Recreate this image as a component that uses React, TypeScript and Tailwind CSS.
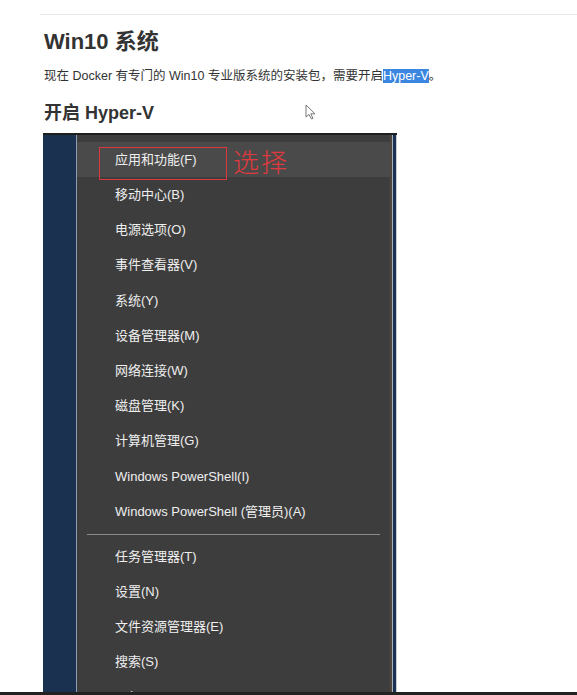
import React from "react";

const font = { fontFamily: '"Liberation Sans", "Noto Sans CJK SC", sans-serif' };

const groupA = [
  "应用和功能(F)",
  "移动中心(B)",
  "电源选项(O)",
  "事件查看器(V)",
  "系统(Y)",
  "设备管理器(M)",
  "网络连接(W)",
  "磁盘管理(K)",
  "计算机管理(G)",
  "Windows PowerShell(I)",
  "Windows PowerShell (管理员)(A)",
];

const groupB = ["任务管理器(T)", "设置(N)", "文件资源管理器(E)", "搜索(S)", "运行(R)"];

function MenuItem({ label, active }: { label: string; active?: boolean }) {
  return (
    <div
      className={`relative flex h-[35.2px] shrink-0 items-center pl-[38px] text-[13px] text-[#efefef] ${
        active ? "bg-[#4a4a4a]" : ""
      }`}
    >
      {label}
      {active && (
        <>
          <span className="absolute left-[22px] top-[5px] h-[33px] w-[128px] border border-[#d9393f]" />
          <span
            className="absolute left-[156px] top-[3px] text-[26px] leading-[32px] tracking-[2px] text-[#e0393e]"
            style={{ fontFamily: '"Noto Sans CJK SC", sans-serif', fontWeight: 300 }}
          >
            选择
          </span>
        </>
      )}
    </div>
  );
}

export default function App() {
  return (
    <div className="relative flex h-[695px] w-[577px] flex-col overflow-hidden bg-white" style={font}>
      <div className="ml-[40px] mt-[14px] h-px bg-[#e8e8e8]" />

      <h2 className="ml-[44px] mt-[13px] text-[22px] font-bold leading-[28px] text-[#333]">Win10 系统</h2>

      <p className="ml-[44px] mt-[10px] text-[12.5px] leading-[20px] text-[#333]">
        现在 Docker 有专门的 Win10 专业版系统的安装包，需要开启
        <span className="bg-[#3b86e0] text-white">Hyper-V</span>。
      </p>

      <h3 className="ml-[44px] mt-[15px] text-[18px] font-bold leading-[24px] text-[#333]">开启 Hyper-V</h3>

      {/* screenshot of the Win+X menu */}
      <div className="ml-[43px] mt-[8px] flex min-h-0 w-[354px] flex-1 flex-col overflow-hidden">
        <div className="h-[2px] shrink-0 bg-[#1e1e1e]" />
        <div className="flex min-h-0 flex-1">
          <div className="w-[33px] bg-[#1b3150]" />
          <div className="w-px bg-[#8d9db2]" />
          <div className="flex min-h-0 w-[313px] flex-col overflow-hidden bg-[#3d3d3d] pt-[7px]">
            {groupA.map((l, i) => (
              <MenuItem key={l} label={l} active={i === 0} />
            ))}
            <div className="flex h-[10px] shrink-0 items-center px-[10px]">
              <div className="h-px w-full bg-[#8a8a8a]" />
            </div>
            {groupB.map((l) => (
              <MenuItem key={l} label={l} />
            ))}
          </div>
          <div className="w-[2px] bg-[#4e463f]" />
          <div className="w-px bg-[#a7b0bc]" />
          <div className="w-[3px] bg-[#1b3150]" />
          <div className="w-px bg-[#c9ced6]" />
        </div>
      </div>

      <div className="h-[3px] shrink-0 bg-[#222]" />

      {/* mouse cursor */}
      <svg className="absolute left-[305px] top-[104px]" width="12" height="16" viewBox="0 0 12 16">
        <path d="M1 1 L1 13 L4 10.5 L6.5 15 L8 14.3 L5.8 9.8 L10 9.8 Z" fill="#fff" stroke="#777" strokeWidth="1" />
      </svg>
    </div>
  );
}
